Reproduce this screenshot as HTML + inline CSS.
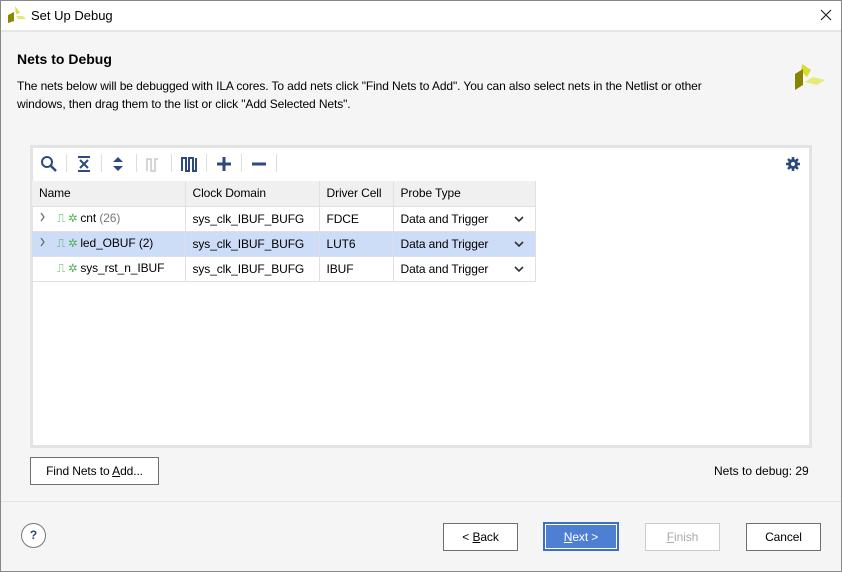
<!DOCTYPE html>
<html><head><style>
*{box-sizing:border-box;margin:0;padding:0}
body{width:842px;height:572px;background:#f5f5f5;font-family:"Liberation Sans",sans-serif;font-size:12px;color:#000;position:relative;overflow:hidden}
.a{position:absolute}
.frame{left:0;top:0;width:842px;height:572px;border:1px solid #888;pointer-events:none}
.title{left:0;top:0;width:842px;height:32px;background:#fff;border-bottom:2px solid #e6e6e6}
.btn{position:absolute;height:28px;background:#fff;border:1px solid #707070;text-align:center;line-height:26px;font-size:12px;letter-spacing:-0.1px}
table{border-collapse:collapse;position:absolute;left:32px;top:181px;letter-spacing:-0.1px}
td{height:25px;padding-left:7px;border-right:1px solid #e0e0e0;border-bottom:1px solid #e0e0e0;white-space:nowrap;position:relative}
.hd td{background:#f0f0f0;height:25px}
.sel td{background:#cddcf7}
.sep{position:absolute;top:154px;width:1px;height:18px;background:#ddd}
.chev{position:absolute;left:120px;top:8px}
</style></head><body>
<div class="a title">
<svg class="a" style="left:8px;top:6px" width="18" height="17" viewBox="0 0 18 17"><path d="M7 0l5 7-4 1z" fill="#d8dc3a"/><path d="M0 9l6-3v9l-6 2z" fill="#8a8a00"/><path d="M8 10h7l3 3h-8z" fill="#e4e878"/></svg>
<div class="a" style="left:31px;top:8px;font-size:13px">Set Up Debug</div>
<svg class="a" style="left:820px;top:9px" width="12" height="12" viewBox="0 0 12 12"><path d="M1 1l10 10M11 1L1 11" stroke="#222" stroke-width="1.2"/></svg>
</div>
<div class="a" style="left:17px;top:51px;font-size:14px;font-weight:bold">Nets to Debug</div>
<div class="a" style="left:17px;top:77px;line-height:18px;width:720px;letter-spacing:-0.1px">The nets below will be debugged with ILA cores. To add nets click "Find Nets to Add". You can also select nets in the Netlist or other windows, then drag them to the list or click "Add Selected Nets".</div>
<svg class="a" style="left:794px;top:62px" width="34" height="34" viewBox="0 0 34 34"><path d="M8 2l9 6-4 7-6-6z" fill="#d9dc30"/><path d="M1 12l8-5v16l-8 5z" fill="#858500"/><path d="M11 20l8-5 12 3-8 5z" fill="#e6ea7a"/></svg>
<div class="a" style="left:30px;top:145px;width:782px;height:303px;border:3px solid #e3e3e3;background:#fff"></div>
<svg class="a" style="left:40px;top:155px" width="18" height="18" viewBox="0 0 18 18"><circle cx="7" cy="7" r="5" fill="none" stroke="#2c4a7e" stroke-width="2"/><path d="M11 11l5 5" stroke="#2c4a7e" stroke-width="2.5"/></svg>
<div class="sep" style="left:66px"></div>
<svg class="a" style="left:77px;top:156px" width="14" height="16" viewBox="0 0 14 16"><path d="M1 1h12M1 15h12M3 4l4 4 4-4M3 12l4-4 4 4" fill="none" stroke="#2c4a7e" stroke-width="2"/></svg>
<div class="sep" style="left:101px"></div>
<svg class="a" style="left:111px;top:156px" width="14" height="16" viewBox="0 0 14 16"><path d="M2 6l5-5 5 5zM2 10l5 5 5-5z" fill="#2c4a7e"/></svg>
<div class="sep" style="left:136px"></div>
<svg class="a" style="left:146px;top:156px" width="16" height="16" viewBox="0 0 16 16"><path d="M1 15V3h4v12h4V3h3" fill="none" stroke="#c8c8c8" stroke-width="1.5"/></svg>
<div class="sep" style="left:171px"></div>
<svg class="a" style="left:181px;top:156px" width="16" height="16" viewBox="0 0 16 16"><path d="M1 15V2h4v13h3V2h4v13h3V2" fill="none" stroke="#2c4a7e" stroke-width="2"/></svg>
<div class="sep" style="left:206px"></div>
<svg class="a" style="left:216px;top:156px" width="16" height="16" viewBox="0 0 16 16"><path d="M8 1v14M1 8h14" stroke="#2c4a7e" stroke-width="3"/></svg>
<div class="sep" style="left:241px"></div>
<svg class="a" style="left:251px;top:156px" width="16" height="16" viewBox="0 0 16 16"><path d="M1 8h14" stroke="#2c4a7e" stroke-width="3"/></svg>
<div class="sep" style="left:276px"></div>
<svg class="a" style="left:785px;top:156px" width="16" height="16" viewBox="0 0 16 16"><circle cx="8" cy="8" r="5" fill="#2c4a7e"/><path d="M8 1v14M1 8h14M3 3l10 10M13 3L3 13" stroke="#2c4a7e" stroke-width="2.5"/><circle cx="8" cy="8" r="2" fill="#fff"/></svg>
<table>
<tr class="hd"><td style="width:153px">Name</td><td style="width:134px">Clock Domain</td><td style="width:74px">Driver Cell</td><td style="width:142px">Probe Type</td></tr>
<tr><td><svg width="18" height="10" viewBox="0 0 18 10"><path d="M2 1l3 4-3 4" fill="none" stroke="#666" stroke-width="1.2"/></svg><span style="color:#4caf50">⎍ ✲</span> cnt <span style="color:#777">(26)</span></td><td>sys_clk_IBUF_BUFG</td><td>FDCE</td><td>Data and Trigger <svg class="chev" width="10" height="8" viewBox="0 0 10 8"><path d="M1 2l4 4 4-4" fill="none" stroke="#333" stroke-width="1.6"/></svg></td></tr>
<tr class="sel"><td><svg width="18" height="10" viewBox="0 0 18 10"><path d="M2 1l3 4-3 4" fill="none" stroke="#666" stroke-width="1.2"/></svg><span style="color:#4caf50">⎍ ✲</span> led_OBUF (2)</td><td>sys_clk_IBUF_BUFG</td><td>LUT6</td><td>Data and Trigger <svg class="chev" width="10" height="8" viewBox="0 0 10 8"><path d="M1 2l4 4 4-4" fill="none" stroke="#333" stroke-width="1.6"/></svg></td></tr>
<tr><td><span style="display:inline-block;width:18px"></span><span style="color:#4caf50">⎍ ✲</span> sys_rst_n_IBUF</td><td>sys_clk_IBUF_BUFG</td><td>IBUF</td><td>Data and Trigger <svg class="chev" width="10" height="8" viewBox="0 0 10 8"><path d="M1 2l4 4 4-4" fill="none" stroke="#333" stroke-width="1.6"/></svg></td></tr>
</table>
<div class="btn" style="left:30px;top:457px;width:129px">Find Nets to <u>A</u>dd...</div>
<div class="a" style="left:714px;top:464px">Nets to debug: 29</div>
<div class="a" style="left:0;top:501px;width:842px;height:1px;background:#e2e2e2"></div>
<div class="a" style="left:21px;top:523px;width:25px;height:25px;border:1px solid #777;border-radius:50%;text-align:center;line-height:23px;font-weight:bold;color:#2c4a7e;background:#fff">?</div>
<div class="btn" style="left:443px;top:523px;width:75px">&lt; <u>B</u>ack</div>
<div class="btn" style="left:543px;top:522px;width:76px;height:29px;background:#4f7fd3;color:#fff;border:2px solid #3b6fc9;box-shadow:inset 0 0 0 1px #fff"><u>N</u>ext &gt;</div>
<div class="btn" style="left:645px;top:523px;width:75px;color:#aaa;border-color:#ccc"><u>F</u>inish</div>
<div class="btn" style="left:746px;top:523px;width:75px">Cancel</div>
<div class="a frame"></div>
</body></html>
